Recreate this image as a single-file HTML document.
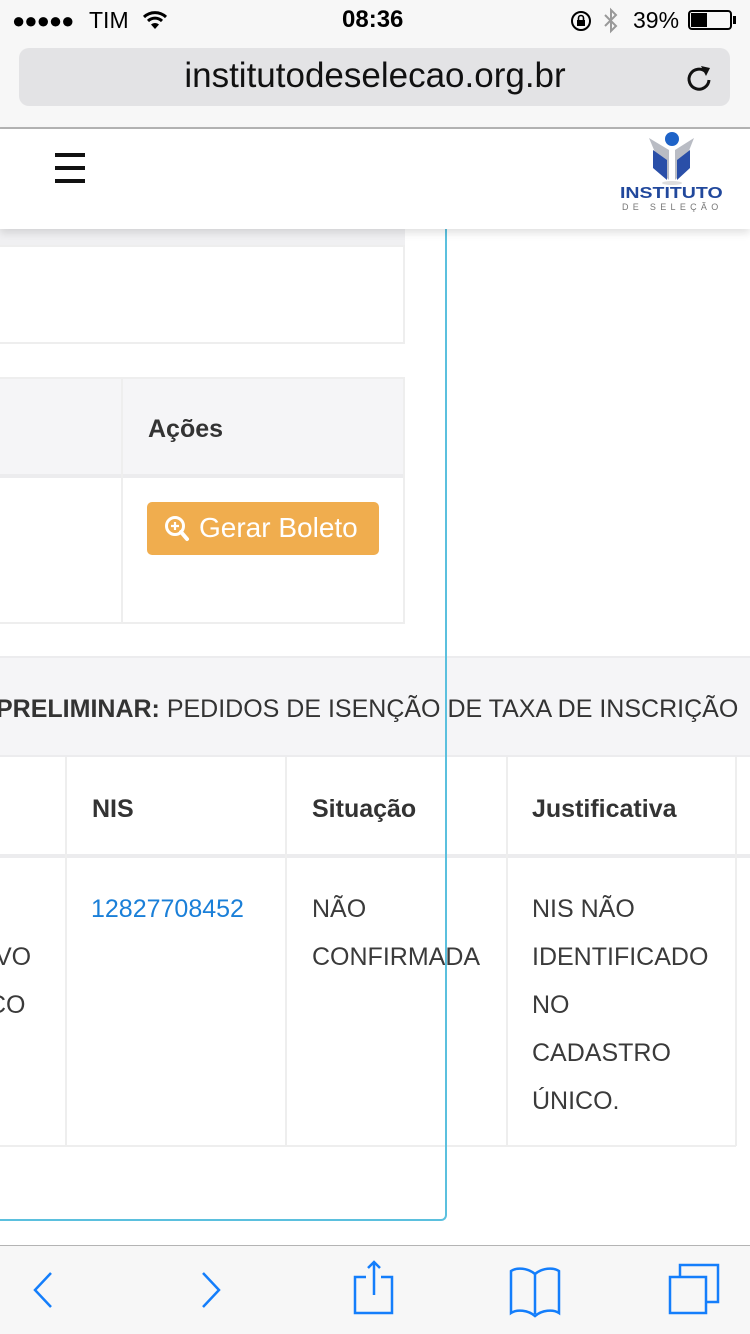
<!DOCTYPE html>
<html><head><meta charset="utf-8"><style>
*{margin:0;padding:0;box-sizing:border-box}
body{width:750px;height:1334px;position:relative;overflow:hidden;background:#fff;font-family:"Liberation Sans",sans-serif;color:#333}
.a{position:absolute}
.t{font-size:25px;color:#3a3a3a;white-space:nowrap}
.b{font-weight:bold;color:#333}
</style></head><body>
<!-- status bar -->
<div class="a" style="left:0;top:0;width:750px;height:128px;background:#f7f7f7"></div>
<div class="a" style="left:12px;top:8px;font-size:22px;color:#000;letter-spacing:-1px">●●●●●</div>
<div class="a" style="left:89px;top:7px;font-size:23px;color:#000">TIM</div>
<svg class="a" style="left:142px;top:10px" width="26" height="20" viewBox="0 0 26 20"><path d="M2 7a16 16 0 0 1 22 0M6 11a10 10 0 0 1 14 0" stroke="#000" stroke-width="3" fill="none"/><path d="M9 14.5a6 6 0 0 1 8 0L13 19z" fill="#000"/></svg>
<div class="a" style="left:342px;top:6px;font-size:24px;font-weight:bold;color:#000">08:36</div>
<svg class="a" style="left:570px;top:9px" width="24" height="24" viewBox="0 0 24 24"><circle cx="11" cy="12" r="9" stroke="#000" stroke-width="2" fill="none"/><rect x="7" y="11" width="8" height="6" fill="#000"/><path d="M8.5 11V9a2.5 2.5 0 0 1 5 0v2" stroke="#000" stroke-width="1.6" fill="none"/></svg>
<svg class="a" style="left:603px;top:7px" width="16" height="28" viewBox="0 0 16 28"><path d="M2 8l11 11-5 5V3l5 5L2 19" stroke="#999" stroke-width="2" fill="none"/></svg>
<div class="a" style="left:633px;top:7px;font-size:23px;color:#000">39%</div>
<div class="a" style="left:688px;top:10px;width:44px;height:20px;border:2px solid #000;border-radius:4px"></div>
<div class="a" style="left:691px;top:13px;width:16px;height:14px;background:#000"></div>
<div class="a" style="left:733px;top:16px;width:3px;height:8px;background:#000"></div>
<!-- url bar -->
<div class="a" style="left:19px;top:48px;width:711px;height:58px;background:#e3e3e5;border-radius:10px"></div>
<div class="a" style="left:0;top:56px;width:750px;text-align:center;font-size:35px;color:#111">institutodeselecao.org.br</div>
<svg class="a" style="left:686px;top:62px" width="28" height="32" viewBox="0 0 28 32"><path d="M20 10a10 10 0 1 0 3 8" stroke="#111" stroke-width="3" fill="none"/><path d="M15 4l9 2-4 8z" fill="#111"/></svg>
<div class="a" style="left:0;top:127px;width:750px;height:2px;background:#b4b4b4"></div>
<!-- content -->
<div class="a" style="left:0;top:229px;width:405px;height:16px;background:#f0f0f2"></div>
<div class="a" style="left:-2px;top:245px;width:407px;height:99px;border:2px solid #eee"></div>
<!-- table1 -->
<div class="a" style="left:-2px;top:377px;width:407px;height:247px;border:2px solid #eee"></div>
<div class="a" style="left:0;top:379px;width:403px;height:96px;background:#f5f5f7"></div>
<div class="a" style="left:0;top:474px;width:403px;height:4px;background:#ececee"></div>
<div class="a" style="left:121px;top:379px;width:2px;height:244px;background:#eee"></div>
<div class="a t b" style="left:148px;top:415px">Ações</div>
<div class="a" style="left:147px;top:502px;width:232px;height:53px;background:#f0ad4e;border-radius:5px"></div>
<svg class="a" style="left:164px;top:514px" width="28" height="30" viewBox="0 0 28 30"><circle cx="11" cy="12" r="8.5" stroke="#fff" stroke-width="3" fill="none"/><path d="M11 8v8M7 12h8" stroke="#fff" stroke-width="2.2"/><path d="M17 18l6 7" stroke="#fff" stroke-width="4" stroke-linecap="round"/></svg>
<div class="a" style="left:199px;top:512px;font-size:28px;color:#fff">Gerar Boleto</div>
<!-- strip -->
<div class="a" style="left:0;top:656px;width:750px;height:101px;background:#f5f5f7;border-top:2px solid #ececee;border-bottom:2px solid #ececee"></div>
<div class="a t" style="left:-4px;top:695px;color:#333;font-size:25px"><b>PRELIMINAR:</b> PEDIDOS DE ISENÇÃO DE TAXA DE INSCRIÇÃO</div>
<!-- table2 -->
<div class="a" style="left:0;top:854px;width:750px;height:4px;background:#ececee"></div>
<div class="a" style="left:0;top:1145px;width:736px;height:2px;background:#eee"></div>
<div class="a" style="left:65px;top:757px;width:2px;height:389px;background:#eee"></div>
<div class="a" style="left:285px;top:757px;width:2px;height:389px;background:#eee"></div>
<div class="a" style="left:506px;top:757px;width:2px;height:389px;background:#eee"></div>
<div class="a" style="left:735px;top:757px;width:2px;height:389px;background:#eee"></div>
<div class="a t b" style="left:92px;top:795px">NIS</div>
<div class="a t b" style="left:312px;top:795px">Situação</div>
<div class="a t b" style="left:532px;top:795px">Justificativa</div>
<div class="a t" style="left:-12px;top:933px;line-height:48px">IVO<br>CO</div>
<div class="a t" style="left:91px;top:885px;line-height:48px;color:#1a7fd8">12827708452</div>
<div class="a t" style="left:312px;top:885px;line-height:48px">NÃO<br>CONFIRMADA</div>
<div class="a t" style="left:532px;top:885px;line-height:48px">NIS NÃO<br>IDENTIFICADO<br>NO<br>CADASTRO<br>ÚNICO.</div>
<!-- blue frame -->
<div class="a" style="left:-10px;top:150px;width:457px;height:1071px;border:2px solid #5bc0de;border-top:none;border-left:none;border-radius:0 0 6px 0"></div>
<!-- header -->
<div class="a" style="left:0;top:129px;width:750px;height:100px;background:#fff;box-shadow:0 4px 8px rgba(0,0,0,0.12)"></div>
<div class="a" style="left:55px;top:153px;width:30px;height:4px;background:#111"></div>
<div class="a" style="left:55px;top:166px;width:30px;height:4px;background:#111"></div>
<div class="a" style="left:55px;top:179px;width:30px;height:4px;background:#111"></div>
<svg class="a" style="left:645px;top:130px" width="52" height="56" viewBox="0 0 52 56"><circle cx="27" cy="9" r="7" fill="#1e63c8"/><path d="M4 8l20 12 0 30 -4-4z M49 8L30 20v30l4-4z" fill="#b9bcc4"/><path d="M8 20l14 10v20L8 38z M45 20L32 30v20l13-12z" fill="#2a4fa8"/><ellipse cx="27" cy="53" rx="10" ry="2" fill="#ddd"/></svg>
<div class="a" style="left:620px;top:185px;font-size:16px;font-weight:900;color:#21489c;transform:scaleX(1.22);transform-origin:0 0">INSTITUTO</div>
<div class="a" style="left:622px;top:202px;font-size:9px;color:#777;letter-spacing:4.3px">DE SELEÇÃO</div>
<!-- bottom toolbar -->
<div class="a" style="left:0;top:1245px;width:750px;height:89px;background:#f7f7f7;border-top:1px solid #b4b4b4"></div>
<svg class="a" style="left:0;top:1245px" width="750" height="89" viewBox="0 0 750 89"><g stroke="#147efb" stroke-width="2.5" fill="none"><path d="M51 28L35 45l16 17"/><path d="M203 28l16 17-16 17"/><path d="M366 32h-11v36h37V32h-11M374 17v33M368 23l6-6 6 6"/><path d="M535 29c-7-6-18-7-24-3v42c6-4 17-3 24 3c7-6 18-7 24-3V26c-6-4-17-3-24 3zM535 29v40"/><path d="M670 32h36v36h-36zM680 32v-12h38v37h-12"/></g></svg>
</body></html>
